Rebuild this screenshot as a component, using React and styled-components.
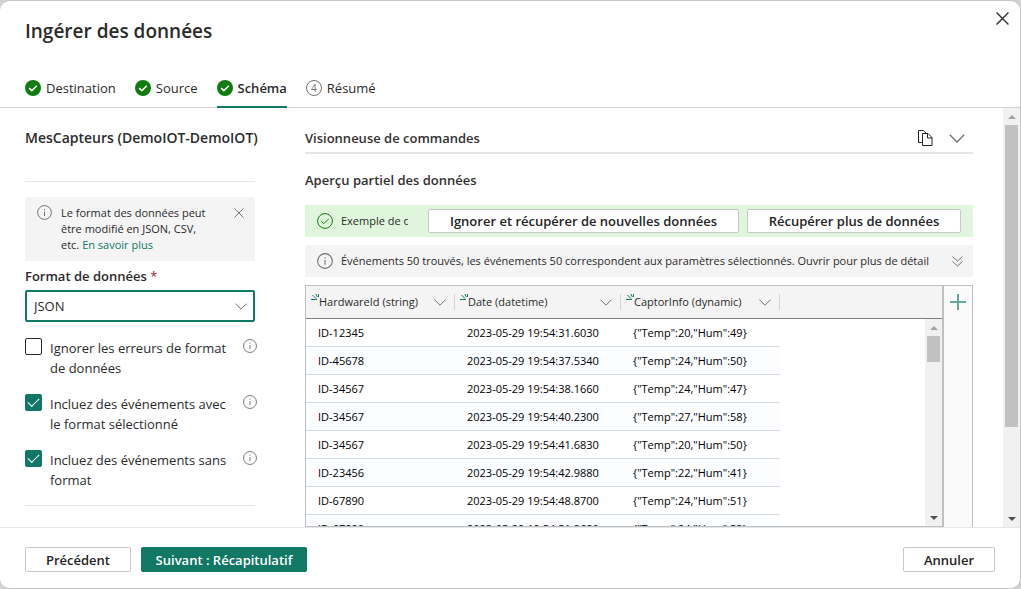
import React from "react";
import styled, { createGlobalStyle, css } from "styled-components";

const color = {
  accent: "#117865",
  success: "#107c10",
  text: "#2b2b2b",
  subtle: "#707070",
  line: "#e6e6e6",
  panel: "#f4f4f4",
  frame: "#bdc1c4",
};

const GlobalStyle = createGlobalStyle`
  *, *::before, *::after { box-sizing: border-box; }
  body {
    margin: 0;
    background: #d2d2d2;
    color: ${color.text};
    font-family: "Open Sans", "Noto Sans", sans-serif;
    font-size: 13px;
    line-height: 20px;
  }
  button, select { font: inherit; color: inherit; }
  svg { display: block; flex: none; }
`;

const Dialog = styled.div`
  display: flex;
  flex-direction: column;
  height: 100vh;
  background: #fff;
  border: solid #c6c6c6;
  border-width: 1px 1px 1px 0;
  border-radius: 10px;
  overflow: hidden;
`;

const Header = styled.header`
  flex: none;
  padding: 0 0 0 25px;
  border-bottom: 1px solid #d1d1d1;
`;

const TitleRow = styled.div`
  display: flex;
  justify-content: space-between;
  align-items: flex-start;
  height: 69px;
`;

const Title = styled.h1`
  margin: 0;
  padding-top: 18px;
  font-size: 19px;
  line-height: 24px;
  font-weight: 600;
`;

const IconButton = styled.button`
  display: inline-flex;
  align-items: center;
  justify-content: center;
  width: ${(p) => p.$size || 16}px;
  height: ${(p) => p.$size || 16}px;
  padding: 0;
  border: 0;
  background: none;
  color: ${(p) => p.$tone || color.subtle};
  flex: none;
  cursor: pointer;
`;

const CloseButton = styled(IconButton)`
  margin: 2px 3px 0 0;
`;

const Steps = styled.ol`
  display: flex;
  gap: 19px;
  margin: 0;
  padding: 0;
  list-style: none;
`;

const Step = styled.li`
  display: flex;
  align-items: center;
  gap: 5px;
  height: 38px;
  margin-bottom: -1px;
  border-bottom: 2px solid transparent;
  ${(p) =>
    p.$active &&
    css`
      border-bottom-color: ${color.accent};
      font-weight: 600;
    `}
`;

const StepNumber = styled.span`
  width: 16px;
  height: 16px;
  border: 1px solid ${color.subtle};
  border-radius: 50%;
  color: ${color.subtle};
  font-size: 10px;
  line-height: 14px;
  text-align: center;
`;

const Body = styled.div`
  display: flex;
  flex: 1;
  min-height: 0;
`;

const Sidebar = styled.aside`
  flex: none;
  width: 232px;
  margin-left: 25px;
  padding-top: 20px;
  padding-right: 2px;
`;

const SourceName = styled.h2`
  margin: 0;
  padding-bottom: 33px;
  border-bottom: 1px solid ${color.line};
  font-size: 14px;
  line-height: 20px;
  font-weight: 600;
  white-space: nowrap;
`;

const Hint = styled.div`
  display: flex;
  align-items: flex-start;
  margin-top: 15px;
  padding: 8px;
  background: ${color.panel};
  font-size: 11px;
  line-height: 16px;
`;

const HintText = styled.p`
  flex: 1;
  margin: 0;
  padding: 0 18px 0 9px;
`;

const HintIcon = styled.span`
  padding-left: 4px;
  color: ${color.subtle};
`;

const Link = styled.a`
  color: ${color.accent};
  text-decoration: none;
`;

const FieldLabel = styled.label`
  display: block;
  padding: 5px 0 4px;
  font-weight: 600;
`;

const Required = styled.span`
  color: #a4262c;
  font-weight: 400;
`;

const SelectBox = styled.div`
  display: grid;
  align-items: center;
  height: 32px;
  border: 2px solid ${color.accent};
  border-radius: 2px;

  > * {
    grid-area: 1 / 1;
  }
  > svg {
    justify-self: end;
    margin-right: 6px;
    color: ${color.subtle};
    pointer-events: none;
  }
`;

const Select = styled.select`
  appearance: none;
  width: 100%;
  height: 28px;
  padding: 0 28px 0 7px;
  border: 0;
  background: none;
  outline: 0;
`;

const Options = styled.div`
  display: flex;
  flex-direction: column;
  gap: 16px;
  margin-top: 16px;
  padding-bottom: 15px;
  border-bottom: 1px solid ${color.line};
`;

const Option = styled.div`
  display: flex;
  align-items: flex-start;
  gap: 8px;
  margin-right: -2px;
`;

const OptionLabel = styled.label`
  flex: 1;
`;

const OptionInfo = styled(IconButton)`
  margin-top: 1px;
`;

const Check = styled.input`
  appearance: none;
  display: grid;
  flex: none;
  width: 17px;
  height: 17px;
  margin: 0;
  border: 1px solid ${color.text};
  border-radius: 2px;
  background: #fff;

  &:checked {
    border-color: ${color.accent};
    background: ${color.accent};
  }
  &:checked::after {
    content: "";
    width: 11px;
    height: 6px;
    margin: 3px 0 0 2px;
    border: solid #fff;
    border-width: 0 0 1px 1px;
    transform: rotate(-45deg);
  }
`;

const Main = styled.main`
  display: flex;
  flex: 1;
  flex-direction: column;
  min-width: 0;
  padding: 20px 30px 0 48px;
`;

const CommandBar = styled.div`
  display: flex;
  align-items: center;
  gap: 16px;
  height: 26px;
  padding: 0 8px 4px 0;
  border-bottom: 2px solid ${color.line};
`;

const SectionTitle = styled.h2`
  flex: 1;
  margin: 0;
  font-size: 13px;
  line-height: 20px;
  font-weight: 600;
  color: #323130;
`;

const PreviewTitle = styled(SectionTitle)`
  flex: none;
  padding: 16px 0 15px;
`;

const Bar = styled.div`
  display: flex;
  flex: none;
  align-items: center;
  gap: 8px;
  height: 32px;
  margin-bottom: 8px;
  padding: 0 ${(p) => (p.$success ? 12 : 8)}px 0 12px;
  background: ${(p) => (p.$success ? "#dff6dd" : color.panel)};
  font-size: 11px;

  > svg {
    color: ${color.subtle};
  }
`;

const BarText = styled.span`
  flex: 1;
  min-width: 0;
  margin-right: 12px;
  overflow: hidden;
  white-space: nowrap;
`;

const Button = styled.button`
  flex: none;
  min-width: ${(p) => p.$width}px;
  height: ${(p) => (p.$small ? 24 : 25)}px;
  padding: 0;
  border: 1px solid ${(p) => (p.$primary ? color.accent : "#c8c8c8")};
  border-radius: 2px;
  background: ${(p) => (p.$primary ? color.accent : "#fff")};
  color: ${(p) => (p.$primary ? "#fff" : "#242424")};
  font-size: 13px;
  font-weight: 600;
  line-height: 20px;
  cursor: pointer;
`;

const GridArea = styled.div`
  display: flex;
  flex: 1;
  min-height: 0;
`;

const Grid = styled.div`
  display: grid;
  flex: 1;
  grid-template: 33px minmax(0, 1fr) / minmax(0, 1fr) 17px;
  min-width: 0;
  border: 1px solid ${color.frame};
  border-right-width: 2px;
  overflow: hidden;
`;

const TableClip = styled.div`
  grid-area: 1 / 1 / 3 / 3;
  overflow: hidden;
`;

const Table = styled.table`
  width: 100%;
  table-layout: fixed;
  border-spacing: 0;
  font-size: 11px;
  line-height: 20px;
`;

const Column = styled.col`
  width: ${(p) => p.$width}px;
`;

const HeadCell = styled.th`
  height: 33px;
  padding: 0;
  border-bottom: 1px solid #7c817d;
  background: ${color.panel};
  font-weight: 400;
  text-align: left;
`;

const HeadContent = styled.div`
  display: flex;
  align-items: center;
  height: 16px;
  padding: 0 8px 0 5px;
  border-right: 1px solid #d2d4d6;

  > svg {
    color: ${color.subtle};
  }
`;

const HeadName = styled.span`
  flex: 1;
  white-space: nowrap;
`;

const HeadMark = styled.span`
  align-self: flex-start;
`;

const Cell = styled.td`
  height: 28px;
  padding: 0 12px;
  border-bottom: 1px solid #d5d9dd;
  background: ${(p) => (p.$odd ? "#fbfdff" : "#fff")};
  color: #000;
  white-space: nowrap;
`;

const Filler = styled.td`
  padding: 0;
`;

const AddColumn = styled.div`
  display: flex;
  flex: none;
  justify-content: center;
  align-items: flex-start;
  width: 29px;
  padding-top: 8px;
  border: solid ${color.frame};
  border-width: 1px 1px 0 0;
  background: #fafafa;
`;

const Track = styled.div`
  display: flex;
  flex: none;
  flex-direction: column;
  align-items: center;
  width: 17px;
  background: #f1f1f1;
  ${(p) =>
    p.$inGrid &&
    css`
      grid-area: 2 / 2;
    `}
`;

const Thumb = styled.div`
  width: 13px;
  height: ${(p) => p.$height};
  background: #c1c1c1;
`;

const TrackArrow = styled.span`
  display: grid;
  place-items: center;
  height: 17px;
  margin-top: ${(p) => (p.$end ? "auto" : 0)};
`;

const Footer = styled.footer`
  display: flex;
  flex: none;
  gap: 10px;
  padding: 19px 25px 16px;
  border-top: 1px solid ${color.line};
`;

const Spacer = styled.span`
  flex: 1;
`;

const Svg = ({ w = 16, h = w, box, children, stroke = 1 }) => (
  <svg
    width={w}
    height={h}
    viewBox={box || `0 0 ${w} ${h}`}
    fill="none"
    stroke="currentColor"
    strokeWidth={stroke}
    aria-hidden="true"
  >
    {children}
  </svg>
);

const InfoIcon = ({ size = 15 }) => (
  <Svg w={size} box="0 0 15 15">
    <circle cx="7.5" cy="7.5" r="6.9" />
    <path d="M7.5 6.5v4.5M7.5 4v1.2" />
  </Svg>
);

const CrossIcon = ({ size = 10 }) => (
  <Svg w={size} box="0 0 12 12" stroke={size > 10 ? 1.3 : 1.1}>
    <path d="M.5.5l11 11M11.5.5l-11 11" />
  </Svg>
);

const ChevronIcon = ({ w = 12 }) => (
  <Svg w={w} h={w / 2 + 1} box="0 0 12 7">
    <path d="M.4.6 6 6.2 11.6.6" />
  </Svg>
);

const DoubleChevronIcon = () => (
  <Svg w={11} h={11}>
    <path d="M.5.5l5 4.5 5-4.5M.5 5.5l5 4.5 5-4.5" />
  </Svg>
);

const DoneIcon = () => (
  <svg width="16" height="16" viewBox="0 0 16 16" aria-hidden="true">
    <circle cx="8" cy="8" r="8" fill={color.success} />
    <path d="M4.2 8.2l2.6 2.5 5-5" fill="none" stroke="#fff" strokeWidth="1.6" />
  </svg>
);

const SuccessIcon = () => (
  <svg width="16" height="16" viewBox="0 0 16 16" fill="none" stroke={color.success} aria-hidden="true">
    <circle cx="8" cy="8" r="7.4" />
    <path d="M4.2 8.2l2.6 2.5 5-5" />
  </svg>
);

const CopyIcon = () => (
  <Svg w={15} h={16}>
    <path d="M4.5 12.5H.5V.5h5l3 3M4.5 3.500h5.500l4 4v8h-9.500zM9.500 3.500v4.500h4.500" />
  </Svg>
);

const TypeMark = () => (
  <svg width="8" height="7" viewBox="0 0 8 7" fill="none" stroke={color.accent} aria-hidden="true">
    <path d="M0 5.500h6M1.500 1l3.500 3.500M4.800 0l1.500 3M7.500 0v3" />
  </svg>
);

const Arrow = ({ down }) => (
  <svg width="8" height="4" viewBox="0 0 8 4" aria-hidden="true">
    <path d={down ? "M0 0h8L4 4z" : "M0 4h8L4 0z"} fill={down ? "#505050" : "#a3a3a3"} />
  </svg>
);

const ScrollBar = ({ thumb, inGrid }) => (
  <Track $inGrid={inGrid}>
    <TrackArrow>
      <Arrow />
    </TrackArrow>
    <Thumb $height={thumb} />
    <TrackArrow $end>
      <Arrow down />
    </TrackArrow>
  </Track>
);

const steps = [
  { name: "Destination", done: true },
  { name: "Source", done: true },
  { name: "Schéma", done: true, active: true },
  { name: "Résumé" },
];

const options = [
  { id: "ignore", label: "Ignorer les erreurs de format de données", checked: false },
  { id: "with", label: "Incluez des événements avec le format sélectionné", checked: true },
  { id: "without", label: "Incluez des événements sans format", checked: true },
];

const columns = [
  { name: "HardwareId (string)", width: 149 },
  { name: "Date (datetime)", width: 166 },
  { name: "CaptorInfo (dynamic)", width: 159 },
];

const rows = [
  ["ID-12345", "2023-05-29 19:54:31.6030", '{"Temp":20,"Hum":49}'],
  ["ID-45678", "2023-05-29 19:54:37.5340", '{"Temp":24,"Hum":50}'],
  ["ID-34567", "2023-05-29 19:54:38.1660", '{"Temp":24,"Hum":47}'],
  ["ID-34567", "2023-05-29 19:54:40.2300", '{"Temp":27,"Hum":58}'],
  ["ID-34567", "2023-05-29 19:54:41.6830", '{"Temp":20,"Hum":50}'],
  ["ID-23456", "2023-05-29 19:54:42.9880", '{"Temp":22,"Hum":41}'],
  ["ID-67890", "2023-05-29 19:54:48.8700", '{"Temp":24,"Hum":51}'],
  ["ID-67890", "2023-05-29 19:54:51.3680", '{"Temp":24,"Hum":53}'],
];

export default function App() {
  return (
    <>
      <GlobalStyle />
      <Dialog role="dialog" aria-labelledby="title">
        <Header>
          <TitleRow>
            <Title id="title">Ingérer des données</Title>
            <CloseButton $size={30} $tone="#333" aria-label="Fermer">
              <CrossIcon size={13} />
            </CloseButton>
          </TitleRow>
          <Steps>
            {steps.map((step, i) => (
              <Step key={step.name} $active={step.active}>
                {step.done ? <DoneIcon /> : <StepNumber>{i + 1}</StepNumber>}
                {step.name}
              </Step>
            ))}
          </Steps>
        </Header>

        <Body>
          <Sidebar>
            <SourceName>MesCapteurs (DemoIOT-DemoIOT)</SourceName>
            <Hint>
              <HintIcon>
                <InfoIcon />
              </HintIcon>
              <HintText>
                Le format des données peut être modifié en JSON, CSV, etc. <Link href="#">En savoir plus</Link>
              </HintText>
              <IconButton aria-label="Ignorer">
                <CrossIcon />
              </IconButton>
            </Hint>
            <FieldLabel htmlFor="format">
              Format de données <Required>*</Required>
            </FieldLabel>
            <SelectBox>
              <Select id="format" defaultValue="JSON">
                <option>JSON</option>
                <option>CSV</option>
              </Select>
              <ChevronIcon />
            </SelectBox>
            <Options>
              {options.map((o) => (
                <Option key={o.id}>
                  <Check type="checkbox" id={o.id} defaultChecked={o.checked} />
                  <OptionLabel htmlFor={o.id}>{o.label}</OptionLabel>
                  <OptionInfo $size={14} aria-label="Informations">
                    <InfoIcon size={14} />
                  </OptionInfo>
                </Option>
              ))}
            </Options>
          </Sidebar>

          <Main>
            <CommandBar>
              <SectionTitle>Visionneuse de commandes</SectionTitle>
              <IconButton $tone="#242424" aria-label="Copier">
                <CopyIcon />
              </IconButton>
              <IconButton aria-label="Développer">
                <ChevronIcon w={16} />
              </IconButton>
            </CommandBar>
            <PreviewTitle>Aperçu partiel des données</PreviewTitle>
            <Bar $success>
              <SuccessIcon />
              <BarText>Exemple de données</BarText>
              <Button $small $width={311}>
                Ignorer et récupérer de nouvelles données
              </Button>
              <Button $small $width={214}>
                Récupérer plus de données
              </Button>
            </Bar>
            <Bar>
              <InfoIcon size={16} />
              <BarText>
                Événements 50 trouvés, les événements 50 correspondent aux paramètres sélectionnés. Ouvrir pour plus de
                détails.
              </BarText>
              <IconButton aria-label="Afficher les détails">
                <DoubleChevronIcon />
              </IconButton>
            </Bar>
            <GridArea>
              <Grid>
                <TableClip>
                  <Table>
                    <colgroup>
                      {columns.map((c) => (
                        <Column key={c.name} $width={c.width} />
                      ))}
                      <col />
                    </colgroup>
                    <thead>
                      <tr>
                        {columns.map((c) => (
                          <HeadCell key={c.name} scope="col">
                            <HeadContent>
                              <HeadMark>
                                <TypeMark />
                              </HeadMark>
                              <HeadName>{c.name}</HeadName>
                              <ChevronIcon />
                            </HeadContent>
                          </HeadCell>
                        ))}
                        <HeadCell as="td" />
                      </tr>
                    </thead>
                    <tbody>
                      {rows.map((row, i) => (
                        <tr key={row[1]}>
                          {row.map((value) => (
                            <Cell key={value} $odd={i % 2 === 1}>
                              {value}
                            </Cell>
                          ))}
                          <Filler />
                        </tr>
                      ))}
                    </tbody>
                  </Table>
                </TableClip>
                <ScrollBar thumb="26px" inGrid />
              </Grid>
              <AddColumn>
                <IconButton $tone="#6aa89c" aria-label="Ajouter une colonne">
                  <Svg w={16} stroke={2}>
                    <path d="M0 8h16M8 0v16" />
                  </Svg>
                </IconButton>
              </AddColumn>
            </GridArea>
          </Main>
          <ScrollBar thumb="72%" />
        </Body>

        <Footer>
          <Button $width={106}>Précédent</Button>
          <Button $width={166} $primary>
            Suivant : Récapitulatif
          </Button>
          <Spacer />
          <Button $width={92}>Annuler</Button>
        </Footer>
      </Dialog>
    </>
  );
}
